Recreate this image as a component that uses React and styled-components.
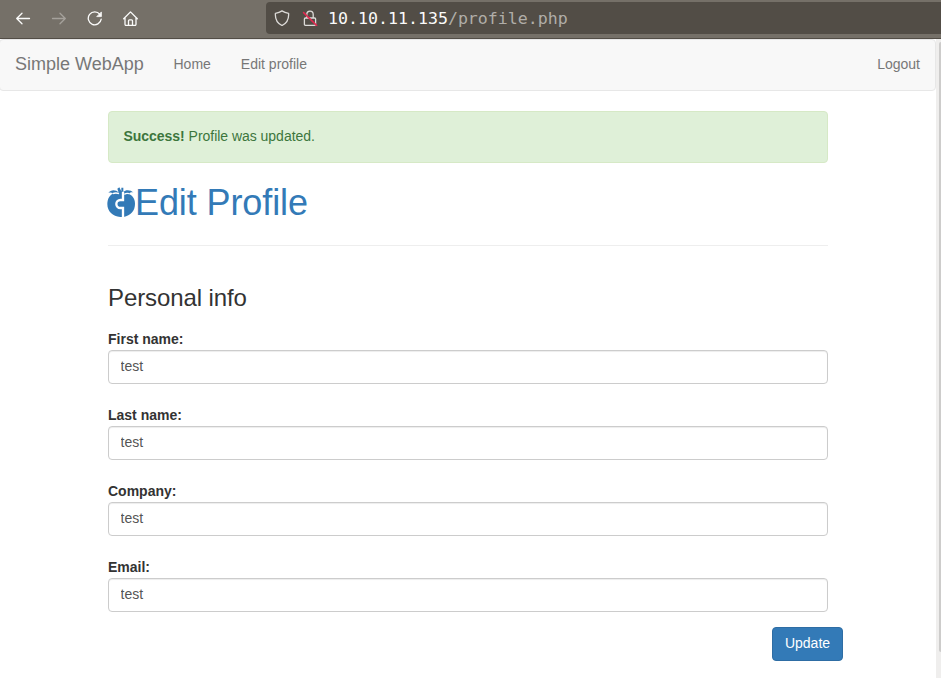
import React from "react";
import styled, { createGlobalStyle } from "styled-components";

const GlobalStyle = createGlobalStyle`
  *, *::before, *::after { box-sizing: border-box; }
  html, body { margin: 0; height: 100%; overflow: hidden; background: #fff; }
  body {
    font-family: "Liberation Sans", Arial, sans-serif;
    font-size: 14px;
    line-height: 20px;
    color: #333;
  }
`;

const Screen = styled.div`
  display: flex;
  flex-direction: column;
  width: 941px;
  height: 678px;
  overflow: hidden;
`;

const BrowserBar = styled.header`
  display: flex;
  flex: 0 0 39px;
  align-items: flex-start;
  background: #757068;
  border-bottom: 1px solid #524d46;
`;

const Tools = styled.div`
  display: flex;
  width: 266px;
  height: 36px;
  padding-left: 15px;
  gap: 20px;
  align-items: center;
`;

const ToolIcon = styled.svg`
  width: 16px;
  height: 16px;
  flex: none;
  fill: none;
  stroke: ${(p) => p.$color || "#fbfbfa"};
  stroke-width: 1.3;
  stroke-linecap: round;
  stroke-linejoin: round;
`;

const AddressBar = styled.div`
  display: flex;
  flex: 1;
  height: 32px;
  margin-top: 2px;
  padding-left: 8px;
  align-items: center;
  background: #524d46;
  border-radius: 4px 0 0 4px;
`;

const LockIcon = styled(ToolIcon)`
  margin-left: 12px;
`;

const Url = styled.span`
  margin-left: 10px;
  padding-top: 1px;
  font: 16.6px/32px "DejaVu Sans Mono", monospace;
  color: #b0ada8;
  white-space: pre;
`;

const Host = styled.span`
  color: #fbfbfa;
`;

const Viewport = styled.div`
  display: flex;
  flex: 1;
  min-height: 0;
`;

const Page = styled.div`
  width: 936px;
`;

const ScrollTrack = styled.div`
  width: 5px;
  padding: 3px 0 0 3px;
  background: #efeeed;
`;

const ScrollThumb = styled.div`
  height: 610px;
  background: #cdcccb;
  border-radius: 3px 0 0 3px;
`;

const Navbar = styled.nav`
  display: flex;
  height: 52px;
  margin-left: -1px;
  padding: 0 15px;
  background: #f8f8f8;
  border: 1px solid #e7e7e7;
  border-radius: 4px;
  color: #777;
`;

const Brand = styled.span`
  width: 128.5px;
  margin-right: 15px;
  font-size: 18px;
  line-height: 48px;
  white-space: nowrap;
`;

const NavLink = styled.span`
  padding: 14px 15px 16px;
  white-space: nowrap;
`;

const Spacer = styled.div`
  flex: 1;
`;

const LogoutLink = styled(NavLink)`
  padding-right: 0;
`;

const Content = styled.main`
  width: 720px;
  margin: 20px 0 0 108px;
`;

const Alert = styled.div`
  height: 52px;
  padding: 14px 15px 14px 14.5px;
  letter-spacing: -0.03px;
  color: #3c763d;
  background: #dff0d8;
  border: 1px solid #d6e9c6;
  border-radius: 4px;
`;

const Title = styled.h1`
  display: flex;
  height: 40px;
  margin: 19px 0 23px;
  font-size: 36px;
  line-height: 41px;
  font-weight: 400;
  letter-spacing: -0.1px;
  color: #337ab7;
`;

const AppleIcon = styled.svg`
  width: 28px;
  height: 30px;
  margin: 5px 0 0 -1px;
  flex: none;
`;

const Divider = styled.hr`
  height: 1px;
  margin: 0;
  border: 0;
  background: #eee;
`;

const SectionTitle = styled.h3`
  height: 26px;
  margin: 39px 0 18px;
  font-size: 24px;
  line-height: 26px;
  font-weight: 400;
  letter-spacing: -0.1px;
`;

const Form = styled.form`
  display: flex;
  flex-direction: column;
  gap: 21px;
`;

const Field = styled.label`
  display: flex;
  flex-direction: column;
  gap: 1px;
  font-weight: 700;
`;

const Input = styled.input`
  height: 34px;
  padding: 5px 12px 7px 11.5px;
  font: 14px/20px "Liberation Sans", Arial, sans-serif;
  color: #555;
  background: #fff;
  border: 1px solid #ccc;
  border-radius: 4px;
  box-shadow: inset 0 1px 1px rgba(0, 0, 0, 0.075);
  outline: none;
`;

const UpdateButton = styled.button`
  align-self: flex-end;
  width: 71px;
  height: 34px;
  margin: -6px -15px 0 0;
  padding: 5px 0 7px;
  font: 14px/20px "Liberation Sans", Arial, sans-serif;
  color: #fff;
  background: #337ab7;
  border: 1px solid #2e6da4;
  border-radius: 4px;
`;

const fields = ["First name:", "Last name:", "Company:", "Email:"];

export default function App() {
  return (
    <Screen>
      <GlobalStyle />
      <BrowserBar>
        <Tools>
          <ToolIcon viewBox="0 0 16 16"><path d="M14.5 8.5H1.7M7 3.2 1.7 8.5 7 13.8" /></ToolIcon>
          <ToolIcon viewBox="0 0 16 16" $color="#a5a19b"><path d="M1.5 8.5h12.8M9 3.2l5.3 5.3L9 13.8" /></ToolIcon>
          <ToolIcon viewBox="0 0 16 16">
            <path d="M12.9 4.3A6.5 6.5 0 1 0 14.2 9.2" />
            <path d="M14.4 2.3v4.3h-4.3z" fill="#fbfbfa" strokeWidth=".8" />
          </ToolIcon>
          <ToolIcon viewBox="0 0 16 16">
            <path d="M.7 8.8 7.5 1.9l6.8 6.9M2 7.5v6.8q0 1.2 1.2 1.2h8.6q1.2 0 1.2-1.2V7.5M5.5 15.3v-4.5q0-1 1-1h2q1 0 1 1v4.5" />
          </ToolIcon>
        </Tools>
        <AddressBar>
          <ToolIcon viewBox="0 0 16 16" $color="#dddbd8">
            <path d="M8 .9Q10.7 2.8 14.6 3.3C15 8.7 12.4 13.4 8 15.5 3.6 13.4 1 8.7 1.4 3.3Q5.3 2.8 8 .9Z" />
          </ToolIcon>
          <LockIcon viewBox="0 0 16 16" $color="#dddbd8">
            <path d="M4.8 7.5V4.4a3.2 3.2 0 0 1 6.4 0v3.1M3.5 8h9q1.1 0 1.1 1.1v5.1q0 1.1-1.1 1.1h-9q-1.1 0-1.1-1.1V9.1Q2.4 8 3.5 8Z" />
            <path d="m1.6 2.6 13 12.8" stroke="#e22850" strokeWidth="1.5" />
          </LockIcon>
          <Url><Host>10.10.11.135</Host>/profile.php</Url>
        </AddressBar>
      </BrowserBar>
      <Viewport>
        <Page>
          <Navbar>
            <Brand>Simple WebApp</Brand>
            <NavLink>Home</NavLink>
            <NavLink>Edit profile</NavLink>
            <Spacer />
            <LogoutLink>Logout</LogoutLink>
          </Navbar>
          <Content>
            <Alert><strong>Success!</strong> Profile was updated.</Alert>
            <Title>
              <AppleIcon viewBox="0 0 84 90" fill="#337ab7">
                <path d="M4 18C12 7 27 8 35 17L31 5l6-4 6 12V2h6v13C56 7 71 8 80 17c-6-2-11-1-15 4 11 4 19 14 19 29 0 22-13 35-34 40H40C17 88 1 73 1 51 1 35 8 24 18 20 14 16 9 16 4 18Z" />
                <path d="M48 14V39h-8a11 11 0 0 0 0 24h8v27" fill="none" stroke="#fff" strokeWidth="7" />
                <path d="M17 20q10-4 19 0M66 20q-8-2-14 2" fill="none" stroke="#fff" strokeWidth="4" />
              </AppleIcon>
              <span>Edit Profile</span>
            </Title>
            <Divider />
            <SectionTitle>Personal info</SectionTitle>
            <Form>
              {fields.map((label) => (
                <Field key={label}>
                  {label}
                  <Input defaultValue="test" />
                </Field>
              ))}
              <UpdateButton type="button">Update</UpdateButton>
            </Form>
          </Content>
        </Page>
        <ScrollTrack><ScrollThumb /></ScrollTrack>
      </Viewport>
    </Screen>
  );
}
